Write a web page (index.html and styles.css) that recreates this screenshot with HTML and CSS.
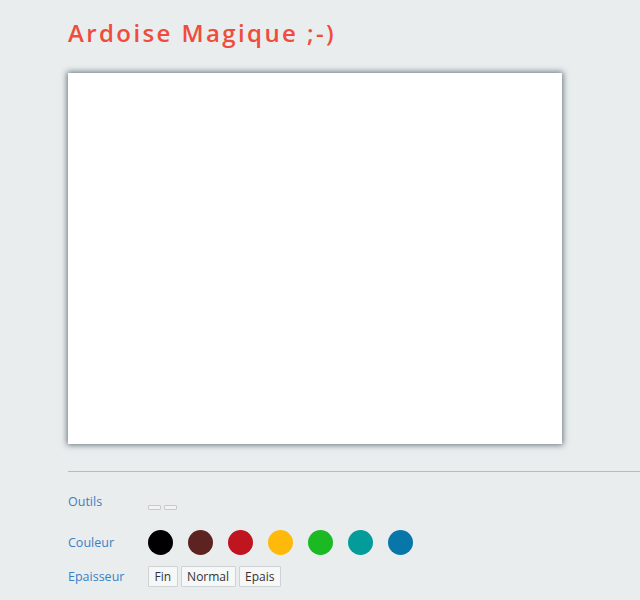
FILE: index.html
```html
<!DOCTYPE html>
<html lang="fr">
<head>
<meta charset="utf-8">
<title>Ardoise Magique</title>
<link rel="stylesheet" href="styles.css">
</head>
<body>
<div class="page">
  <h1 class="title">Ardoise Magique ;-)</h1>
  <div class="canvas"></div>
  <hr class="sep">
  <div class="controls">
    <div class="row row-tools">
      <span class="label">Outils</span>
      <div class="items">
        <button class="tool"></button>
        <button class="tool"></button>
      </div>
    </div>
    <div class="row row-colors">
      <span class="label">Couleur</span>
      <div class="items colors">
        <span class="dot c-black"></span>
        <span class="dot c-brown"></span>
        <span class="dot c-red"></span>
        <span class="dot c-yellow"></span>
        <span class="dot c-green"></span>
        <span class="dot c-teal"></span>
        <span class="dot c-blue"></span>
      </div>
    </div>
    <div class="row row-size">
      <span class="label">Epaisseur</span>
      <div class="items sizes">
        <button class="size">Fin</button>
        <button class="size">Normal</button>
        <button class="size">Epais</button>
      </div>
    </div>
  </div>
</div>
</body>
</html>
```
FILE: styles.css
```css
html, body {
  margin: 0;
  padding: 0;
  background: #e9edee;
  font-family: "Open Sans", "Liberation Sans", sans-serif;
}
.page {
  padding: 16px 0 0 68px;
}
.title {
  margin: 0;
  font-size: 24px;
  font-weight: 600;
  letter-spacing: 2.4px;
  color: #f04c3c;
  line-height: 34px;
}
.canvas {
  margin-top: 23px;
  width: 494px;
  height: 371px;
  background: #fff;
  box-shadow: 0 0 6px 1px rgba(60, 75, 90, 0.75);
}
.sep {
  margin: 27px 0 0 0;
  border: 0;
  border-top: 1px solid #b9bcbe;
  height: 0;
}
.controls {
  padding-top: 21px;
}
.row {
  display: flex;
  align-items: center;
}
.label {
  width: 80px;
  font-size: 12.5px;
  color: #3a80c4;
}
.items {
  display: flex;
  align-items: center;
}
.row-tools {
  height: 18px;
}
.row-tools .label {
  align-self: flex-start;
}
.tool {
  width: 13px;
  height: 5px;
  margin: 10px 3px 0 0;
  padding: 0;
  border: 1px solid #c8cbcd;
  border-radius: 1px;
  background: #f2f3f4;
}
.row-colors {
  margin-top: 18px;
  height: 26px;
}
.colors {
  gap: 15px;
}
.dot {
  width: 25px;
  height: 25px;
  border-radius: 50%;
  display: block;
}
.c-black { background: #000; }
.c-brown { background: #5c2321; }
.c-red { background: #c0141e; }
.c-yellow { background: #ffb90b; }
.c-green { background: #1bba23; }
.c-teal { background: #039c9a; }
.c-blue { background: #0777aa; }
.row-size {
  margin-top: 11px;
}
.sizes {
  gap: 3px;
}
.size {
  font-family: "Open Sans", "Liberation Sans", sans-serif;
  font-size: 12px;
  color: #333;
  background: #f6f7f7;
  border: 1px solid #cfd2d4;
  border-radius: 1px;
  padding: 1px 5.5px;
  height: 21px;
  line-height: 17px;
}
```
